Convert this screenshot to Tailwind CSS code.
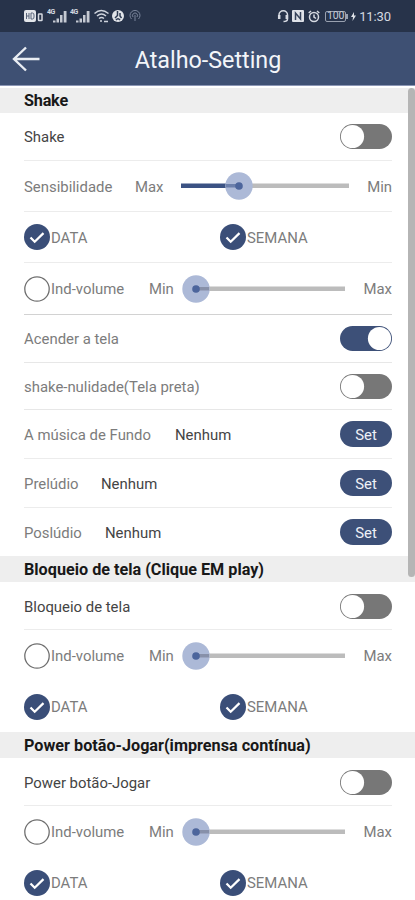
<!DOCTYPE html>
<html lang="pt">
<head>
<meta charset="utf-8">
<title>Atalho-Setting</title>
<script src="https://cdn.jsdelivr.net/npm/@tailwindcss/browser@4"></script>
</head>
<body class="bg-white">
<svg class="hidden">
  <symbol id="checked" viewBox="0 0 26 26"><circle cx="13" cy="13" r="13" fill="#3a4e78"/><path d="M6.500 13.500l4.200 4.300 8.800-8.700" fill="none" stroke="#fff" stroke-width="2.200"/></symbol>
  <symbol id="unchecked" viewBox="0 0 26 26"><circle cx="13" cy="13" r="12.200" fill="#fff" stroke="#707070" stroke-width="1.300"/></symbol>
  <symbol id="off" viewBox="0 0 52 25"><rect width="52" height="25" rx="12.500" fill="#777"/><circle cx="12.500" cy="12.500" r="11.600" fill="#fff"/></symbol>
  <symbol id="on" viewBox="0 0 52 25"><rect width="52" height="25" rx="12.500" fill="#3d5078"/><circle cx="39.500" cy="12.500" r="11.600" fill="#fff"/></symbol>
  <symbol id="volume" viewBox="0 0 164 28"><rect x="14" y="11.500" width="149" height="4.500" fill="#bcbcbc"/><circle cx="14" cy="14" r="13.700" fill="#acb9d7"/><rect x="14" y="12" width="13" height="3.500" fill="#8790a9"/><circle cx="14" cy="14" r="3.800" fill="#4c659c"/></symbol>
  <symbol id="signal" viewBox="0 0 20 14"><path d="M6 13.500v-2h2.500v2zM9.500 13.500V9.500H12v4zM13 13.500V6h2.500v7.500zM16.700 13.500V2h2.800v11.500z" fill="#c5cad3"/></symbol>
</svg>
<div class="relative flex h-[900px] w-[415px] flex-col overflow-hidden bg-white text-[14.9px] font-normal leading-none text-[#7c7c7c] [font-family:Roboto,sans-serif]">
  <div class="flex h-8 shrink-0 items-center bg-[#27334a] pl-6 pr-6 text-[#d4d9e1]">
    <svg class="h-3 w-5 shrink-0" viewBox="0 0 20 12"><rect width="12" height="12" rx="2" fill="#e3e6ea"/><path d="M2.500 3v6M5 3v6M2.500 6H5M7 3v6h1.500q1.500 0 1.500-2V5q0-2-1.500-2z" fill="none" stroke="#59647a"/><rect x="14.500" y="4" width="3.500" height="6.500" rx=".5" fill="none" stroke="#d6dae1" stroke-width="1.500"/></svg>
    <div class="relative ml-[3px] h-[14px] w-5"><svg class="h-[14px] w-5"><use href="#signal"/></svg><span class="absolute left-0 top-0 text-[7px] font-bold tracking-[-.4px]">4G</span></div>
    <div class="relative ml-[3px] h-[14px] w-5"><svg class="h-[14px] w-5"><use href="#signal"/></svg><span class="absolute left-0 top-0 text-[7px] font-bold tracking-[-.4px]">4G</span></div>
    <svg class="ml-[4px] h-[14px] w-[15px]" viewBox="0 0 15 14" fill="none" stroke="#ced3dc" stroke-width="1.500"><path d="M.5 4.500q6.500-6 14 0M3 7q4.500-4 9 0M5 9.500q2.500-2 5 0M6 12h2M10 12.500h4"/></svg>
    <svg class="ml-[3px] h-3 w-3" viewBox="0 0 12 12"><circle cx="6" cy="6" r="6" fill="#e1e4e9"/><path d="M5.500 1v4.500L3 8M8 3v3l1.500 2M4 10q2-2.500 4 0" fill="none" stroke="#2d3a52" stroke-width="1.500"/></svg>
    <svg class="ml-[5px] h-3 w-3" viewBox="0 0 12 12" fill="none" stroke="#78839a"><path d="M2.500 9a5 5 0 1 1 7 0M4 7a2.500 2.500 0 1 1 4 0M6 5v6"/></svg>
    <svg class="ml-auto h-[13px] w-3" viewBox="0 0 12 13" fill="none" stroke="#d6dae2" stroke-width="1.500"><path d="M2 7V5a4 4 0 0 1 8.500 0v4q0 2.500-4 2.500"/><path d="M2.200 5v4M9.800 5v4" stroke-width="2.500"/></svg>
    <svg class="ml-[3px] h-3 w-3" viewBox="0 0 12 12"><rect width="12" height="12" rx="1" fill="#dfe2e8"/><path d="M3.500 10V3l5 6V2" fill="none" stroke="#35425a" stroke-width="1.500"/></svg>
    <svg class="ml-[4px] h-[13px] w-3" viewBox="0 0 12 13" fill="none" stroke="#d6dae2" stroke-width="1.500"><circle cx="6" cy="7" r="4.500"/><path d="M.7 3L3 1M11.300 3L9 1M6 4.500V7l2 1.500"/></svg>
    <div class="ml-[5px] flex h-[11px] w-[21px] items-center justify-center rounded-[2px] border border-[#99a1b0] text-[10.5px] tracking-[-.2px] text-[#c5cbd5]">100</div>
    <div class="h-[5px] w-[2px] bg-[#99a1b0]"></div>
    <svg class="ml-[3px] h-[9px] w-[5px]" viewBox="0 0 5 9"><path d="M3 0L0 5h2L1.500 9 5 3.500H3z" fill="#dfe2e8"/></svg>
    <div class="ml-[3px] text-[13px] tracking-[-.1px]">11:30</div>
  </div>
  <div class="relative flex h-[54px] shrink-0 items-center justify-center border-b border-[#8b96b5] bg-[#3e5073] text-[23.3px] text-[#f3f5f9]">
    <svg class="absolute left-3 top-[14px] h-[26px] w-7" viewBox="0 0 28 26" fill="none" stroke="#e9edf3" stroke-width="2.400"><path d="M27.500 13H2M14 1.500L2 13l12 11.500"/></svg>
    <div class="pl-[1px] pt-1">Atalho-Setting</div>
  </div>
  <div class="mt-[2px] flex h-[25px] shrink-0 items-center bg-[#eee] pl-6 pt-[1px] text-[16.2px] font-bold text-[#181818]"><span class="tracking-[-.2px]">Shake</span></div>
  <div class="ml-6 mr-[23px] flex h-12 shrink-0 items-center justify-between border-b border-[#ececec] text-[#444]"><span class="pt-[2px]">Shake</span><svg class="h-[25px] w-[52px]"><use href="#off"/></svg></div>
  <div class="ml-6 mr-[23px] flex h-[51px] shrink-0 items-center border-b border-[#ececec]">
    <span class="w-[111px] pt-[2px]">Sensibilidade</span><span class="w-[46px] pt-[2px]">Max</span>
    <svg class="h-7 w-[168px]" viewBox="0 0 168 28"><rect x="0" y="11.500" width="58" height="4.500" fill="#3b5283"/><rect x="58" y="11.500" width="110" height="4.500" fill="#bcbcbc"/><circle cx="58" cy="14" r="13.700" fill="#acb9d7"/><rect x="45" y="12" width="13" height="3.500" fill="#6b7fab"/><circle cx="58" cy="14" r="3.800" fill="#4c659c"/></svg>
    <span class="ml-auto pt-[2px]">Min</span>
  </div>
  <div class="ml-6 mr-[23px] flex h-[51px] shrink-0 items-center border-b border-[#ececec]"><svg class="h-[26px] w-[26px]"><use href="#checked"/></svg><span class="ml-[1px] w-[169px] pt-[2px]">DATA</span><svg class="h-[26px] w-[26px]"><use href="#checked"/></svg><span class="ml-[1px] pt-[2px]">SEMANA</span></div>
  <div class="ml-6 mr-[23px] flex h-[52px] shrink-0 items-center border-b border-[#d2d2d2]"><svg class="h-[26px] w-[26px]"><use href="#unchecked"/></svg><span class="ml-[1px] w-[98px] pt-[2px]">Ind-volume</span><span class="w-[33px] pt-[2px]">Min</span><svg class="h-7 w-[164px]"><use href="#volume"/></svg><span class="ml-auto pt-[2px]">Max</span></div>
  <div class="ml-6 mr-[23px] flex h-12 shrink-0 items-center justify-between border-b border-[#e7e7e7]"><span class="pt-[2px]">Acender a tela</span><svg class="h-[25px] w-[52px]"><use href="#on"/></svg></div>
  <div class="ml-6 mr-[23px] flex h-[47px] shrink-0 items-center justify-between border-b border-[#e7e7e7]"><span class="pt-[2px]">shake-nulidade(Tela preta)</span><svg class="h-[25px] w-[52px]"><use href="#off"/></svg></div>
  <div class="ml-6 mr-[23px] flex h-[49px] shrink-0 items-center border-b border-[#ececec]"><span class="w-[151px] pt-[2px]">A música de Fundo</span><span class="pt-[2px] text-[#444]">Nenhum</span><button class="ml-auto h-[26px] w-[52px] rounded-full bg-[#3d5078] pt-[2px] text-[#eef1f7]">Set</button></div>
  <div class="ml-6 mr-[23px] flex h-[49px] shrink-0 items-center border-b border-[#ececec]"><span class="w-[77px] pt-[2px]">Prelúdio</span><span class="pt-[2px] text-[#444]">Nenhum</span><button class="ml-auto h-[26px] w-[52px] rounded-full bg-[#3d5078] pt-[2px] text-[#eef1f7]">Set</button></div>
  <div class="ml-6 mr-[23px] flex h-[48px] shrink-0 items-center"><span class="w-[81px] pt-[2px]">Poslúdio</span><span class="pt-[2px] text-[#444]">Nenhum</span><button class="ml-auto h-[26px] w-[52px] rounded-full bg-[#3d5078] pt-[2px] text-[#eef1f7]">Set</button></div>
  <div class="flex h-[26px] shrink-0 items-center bg-[#eee] pl-6 pt-[2px] text-[16.2px] font-bold text-[#181818]">Bloqueio de tela (Clique EM play)</div>
  <div class="ml-6 mr-[23px] flex h-12 shrink-0 items-center justify-between border-b border-[#ececec] text-[#444]"><span class="pt-[3px]">Bloqueio de tela</span><svg class="relative top-[1px] h-[25px] w-[52px]"><use href="#off"/></svg></div>
  <div class="ml-6 mr-[23px] flex h-[51px] shrink-0 items-center"><svg class="h-[26px] w-[26px]"><use href="#unchecked"/></svg><span class="ml-[1px] w-[98px] pt-[2px]">Ind-volume</span><span class="w-[33px] pt-[2px]">Min</span><svg class="h-7 w-[164px]"><use href="#volume"/></svg><span class="ml-auto pt-[2px]">Max</span></div>
  <div class="ml-6 mr-[23px] flex h-[51px] shrink-0 items-center"><svg class="h-[26px] w-[26px]"><use href="#checked"/></svg><span class="ml-[1px] w-[169px] pt-[2px]">DATA</span><svg class="h-[26px] w-[26px]"><use href="#checked"/></svg><span class="ml-[1px] pt-[2px]">SEMANA</span></div>
  <div class="flex h-[26px] shrink-0 items-center bg-[#eee] pl-6 pt-[2px] text-[16.2px] font-bold text-[#181818]">Power botão-Jogar(imprensa contínua)</div>
  <div class="ml-6 mr-[23px] flex h-12 shrink-0 items-center justify-between border-b border-[#ececec] text-[#444]"><span class="pt-[3px]">Power botão-Jogar</span><svg class="relative top-[1px] h-[25px] w-[52px]"><use href="#off"/></svg></div>
  <div class="ml-6 mr-[23px] flex h-[51px] shrink-0 items-center"><svg class="h-[26px] w-[26px]"><use href="#unchecked"/></svg><span class="ml-[1px] w-[98px] pt-[2px]">Ind-volume</span><span class="w-[33px] pt-[2px]">Min</span><svg class="h-7 w-[164px]"><use href="#volume"/></svg><span class="ml-auto pt-[2px]">Max</span></div>
  <div class="ml-6 mr-[23px] flex h-[51px] shrink-0 items-center"><svg class="h-[26px] w-[26px]"><use href="#checked"/></svg><span class="ml-[1px] w-[169px] pt-[2px]">DATA</span><svg class="h-[26px] w-[26px]"><use href="#checked"/></svg><span class="ml-[1px] pt-[2px]">SEMANA</span></div>
  <div class="absolute right-0 top-[88px] h-[489px] w-[7px] rounded-full bg-[#b5b5b5]"></div>
</div>
</body>
</html>
